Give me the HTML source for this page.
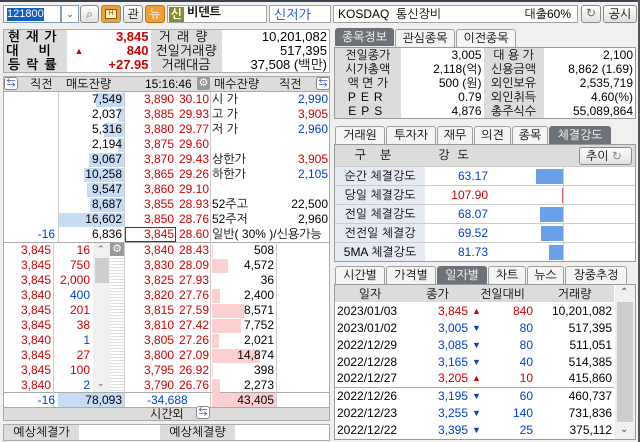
<!DOCTYPE html>
<html><head><meta charset="utf-8"><style>
*{box-sizing:border-box;margin:0;padding:0}
body{width:640px;height:442px;background:#f0f0f0;font-family:"Liberation Sans","NanumGothic","Noto Sans CJK KR",sans-serif;font-size:12px;color:#000;position:relative;overflow:hidden}
.a{position:absolute}
.r{color:#d00000}.b{color:#0040d0}
table{border-collapse:collapse;table-layout:fixed;position:absolute}
td{padding:0 2px;white-space:nowrap;overflow:hidden;line-height:14px}
.g{background:#dcdcdc}
.gl{background:#e6eaf2}
.w{background:#fff}
.R{text-align:right}.C{text-align:center}
.tab{position:absolute;height:18px;border:1px solid #a0a0a0;border-bottom:none;background:#f4f4f4;text-align:center;line-height:17px;font-size:12px;border-radius:3px 3px 0 0}
.tab.on{background:#6d7278;color:#fff;border-color:#6d7278}
.btn{position:absolute;border:1px solid #8a8a8a;border-radius:3px;background:linear-gradient(#fff,#e0e0e0);text-align:center}
</style></head><body>
<div class="a" style="left:0;top:0;width:640px;height:2px;background:#3a4450"></div>
<div class="a w" style="left:3px;top:5px;width:58px;height:18px;border:1px solid #7f9db9"><span style="background:#1060c0;color:#fff;font-size:11px;margin:2px 0 0 3px;display:inline-block;line-height:13px">121800</span></div>
<div class="a w" style="left:61px;top:5px;width:18px;height:18px;border:1px solid #7f9db9;text-align:center;font-size:9px;line-height:16px;color:#444">⌄</div>
<div class="btn" style="left:80px;top:5px;width:19px;height:18px;color:#666;line-height:16px">⌕</div>
<div class="btn" style="left:101px;top:5px;width:20px;height:18px;background:#f0a030"><div style="margin:3px auto;width:12px;height:10px;background:#fff3c0;border:1px solid #a05000;font-size:7px;line-height:8px;color:#a05000">H</div></div>
<div class="btn" style="left:123px;top:5px;width:20px;height:18px;line-height:16px">관</div>
<div class="btn" style="left:145px;top:5px;width:20px;height:18px;background:#f0a030;color:#fff;line-height:16px;border-color:#c07010">뉴</div>
<div class="a w" style="left:167px;top:5px;width:100px;height:18px;border:1px solid #a0a0a0"><span style="background:#8a8a30;color:#fff;display:inline-block;width:15px;height:15px;text-align:center;line-height:15px;margin:1px;font-weight:bold">신</span><b style="position:relative;top:-2px;margin-left:2px">비덴트</b></div>
<div class="a w b" style="left:269px;top:5px;width:62px;height:18px;border:1px solid #a0a0a0;padding:1px 4px;font-size:13px">신저가</div>
<div class="a w" style="left:333px;top:5px;width:245px;height:18px;border:1px solid #a0a0a0;padding:1px 4px">KOSDAQ&nbsp;&nbsp;통신장비<span style="position:absolute;right:6px">대출60%</span></div>
<div class="btn" style="left:581px;top:5px;width:20px;height:18px;color:#666;line-height:15px">↻</div>
<div class="btn" style="left:603px;top:5px;width:34px;height:18px;line-height:16px">공시</div>

<table style="left:3px;top:29px;width:327px;font-size:13px;border:1px solid #aaa">
<col style="width:63px"><col style="width:84px"><col style="width:71px"><col>
<tr><td class="g C" style="font-weight:bold;letter-spacing:6px">현재가</td><td class="w R r" style="font-weight:bold">3,845</td><td class="g C" style="letter-spacing:6px">거래량</td><td class="w R">10,201,082</td></tr>
<tr><td class="g C" style="font-weight:bold;letter-spacing:20px">대비</td><td class="w R r" style="font-weight:bold"><span style="float:left;font-size:9px;margin-left:6px">▲</span>840</td><td class="g C">전일거래량</td><td class="w R">517,395</td></tr>
<tr><td class="g C" style="font-weight:bold;letter-spacing:6px">등락률</td><td class="w R r" style="font-weight:bold">+27.95</td><td class="g C">거래대금</td><td class="w R">37,508 (백만)</td></tr>
</table>

<div class="a g" style="left:3px;top:76px;width:327px;height:16px;border:1px solid #aaa"></div>
<div class="a" style="left:4px;top:77px;width:14px;height:13px;border:1px solid #888;border-radius:3px;background:#fff;font-size:9px;line-height:11px;color:#2040c0;text-align:center">⇆</div>
<div class="a" style="left:30px;top:77px">직전</div>
<div class="a" style="left:66px;top:77px">매도잔량</div>
<div class="a" style="left:145px;top:77px">15:16:46</div>
<div class="a" style="left:197px;top:77px;width:13px;height:13px;background:#999;border-radius:2px;color:#fff;font-size:11px;line-height:13px;text-align:center">⚙</div>
<div class="a" style="left:214px;top:77px">매수잔량</div>
<div class="a" style="left:279px;top:77px">직전</div>
<div class="a" style="left:316px;top:77px;width:14px;height:13px;border:1px solid #888;border-radius:3px;background:#fff;font-size:9px;line-height:11px;color:#2040c0;text-align:center">⇆</div>

<div class="a w" style="left:3px;top:92px;width:327px;height:315px;border-left:1px solid #aaa;border-right:1px solid #aaa"></div>
<div class="a" style="left:3px;top:242px;width:327px;height:1px;background:#aaa"></div>
<div class="a" style="left:3px;top:392px;width:327px;height:1px;background:#aaa"></div>
<div class="a" style="left:58px;top:92px;width:1px;height:150px;background:#ccc"></div>
<div class="a" style="left:124px;top:92px;width:1px;height:150px;background:#ccc"></div>
<div class="a" style="left:210px;top:92px;width:1px;height:315px;background:#ccc"></div>
<div class="a" style="left:53px;top:242px;width:1px;height:165px;background:#ccc"></div>
<div class="a" style="left:124px;top:242px;width:1px;height:165px;background:#ccc"></div>
<div class="a" style="left:276px;top:242px;width:1px;height:165px;background:#ccc"></div>
<div class="a" style="left:93px;top:243px;width:17px;height:149px;background:#f0f0f0"></div>
<div class="a" style="left:95px;top:258px;width:14px;height:25px;background:#cdcdcd"></div>
<div class="a" style="left:97px;top:244px;font-size:9px;color:#555">⌃</div>
<div class="a" style="left:97px;top:378px;font-size:9px;color:#555">⌄</div>
<div class="a" style="left:110px;top:243px;width:14px;height:149px;background:repeating-linear-gradient(#ddd 0 1px,#fff 1px 3px)"></div>
<div class="a" style="left:110px;top:243px;width:14px;height:13px;background:#999;color:#fff;font-size:11px;line-height:13px;text-align:center">⚙</div>

<div id="ob"></div>
<div class="a" style="left:125px;top:227px;width:51px;height:15px;border:1px solid #d00000"></div>

<div class="a" style="left:58px;top:393px;width:66px;height:14px;background:#c6dcf5"></div>
<div class="a" style="left:212px;top:393px;width:64px;height:14px;background:#fcd0d0"></div>
<div class="a b R" style="left:5px;top:393px;width:50px;text-align:right">-16</div>
<div class="a R" style="left:58px;top:393px;width:64px;text-align:right">78,093</div>
<div class="a b" style="left:147px;top:393px">-34,688</div>
<div class="a" style="left:212px;top:393px;width:62px;text-align:right">43,405</div>
<div class="a g" style="left:3px;top:407px;width:327px;height:14px;border:1px solid #aaa"></div>
<div class="a" style="left:150px;top:407px">시간외</div>
<div class="a" style="left:196px;top:406px;width:14px;height:13px;border:1px solid #888;border-radius:3px;background:#fff;font-size:9px;line-height:11px;color:#2040c0;text-align:center">⇆</div>
<div class="a" style="left:3px;top:424px;width:327px;height:17px;border:1px solid #aaa;background:#fff"></div>
<div class="a g C" style="left:4px;top:425px;width:75px;height:15px">예상체결가</div>
<div class="a g C" style="left:160px;top:425px;width:75px;height:15px">예상체결량</div>

<div class="tab on" style="left:335px;top:28px;width:59px">종목정보</div>
<div class="tab" style="left:395px;top:29px;width:60px">관심종목</div>
<div class="tab" style="left:456px;top:29px;width:60px">이전종목</div>
<table style="left:334px;top:47px;width:302px;border:1px solid #999">
<col style="width:66px"><col style="width:83px"><col style="width:60px"><col>
<tr><td class="g C">전일종가</td><td class="w R">3,005</td><td class="g C">대 용 가</td><td class="w R">2,100</td></tr>
<tr><td class="g C">시가총액</td><td class="w R">2,118(억)</td><td class="g C">신용금액</td><td class="w R">8,862 (1.69)</td></tr>
<tr><td class="g C">액 면 가</td><td class="w R">500 (원)</td><td class="g C">외인보유</td><td class="w R">2,535,719</td></tr>
<tr><td class="g C" style="letter-spacing:5px">PER</td><td class="w R">0.79</td><td class="g C">외인취득</td><td class="w R">4.60(%)</td></tr>
<tr><td class="g C" style="letter-spacing:5px">EPS</td><td class="w R">4,876</td><td class="g C">총주식수</td><td class="w R">55,089,864</td></tr>
</table>

<div class="tab" style="left:335px;top:126px;width:50px">거래원</div>
<div class="tab" style="left:386px;top:126px;width:50px">투자자</div>
<div class="tab" style="left:437px;top:126px;width:36px">재무</div>
<div class="tab" style="left:474px;top:126px;width:37px">의견</div>
<div class="tab" style="left:512px;top:126px;width:36px">종목</div>
<div class="tab on" style="left:549px;top:126px;width:62px">체결강도</div>
<div class="a w" style="left:334px;top:144px;width:302px;height:118px;border:1px solid #999"></div>
<table style="left:335px;top:145px;width:300px">
<col style="width:90px"><col style="width:65px"><col>
<tr style="height:21px"><td class="g C" style="letter-spacing:14px">구분</td><td class="g C" style="letter-spacing:8px">강도</td><td class="g"></td></tr>
<tr style="height:19px;border-top:1px solid #ccc"><td class="gl C">순간 체결강도</td><td class="R b">63.17</td><td></td></tr>
<tr style="height:19px;border-top:1px solid #ccc"><td class="gl C">당일 체결강도</td><td class="R r">107.90</td><td></td></tr>
<tr style="height:19px;border-top:1px solid #ccc"><td class="gl C">전일 체결강도</td><td class="R b">68.07</td><td></td></tr>
<tr style="height:19px;border-top:1px solid #ccc"><td class="gl C">전전일 체결강</td><td class="R b">69.52</td><td></td></tr>
<tr style="height:19px;border-top:1px solid #ccc"><td class="gl C">5MA 체결강도</td><td class="R b">81.73</td><td></td></tr>
</table>
<div class="btn" style="left:579px;top:147px;width:53px;height:18px;line-height:16px;text-align:left;padding-left:6px">추이 <span style="color:#888">↻</span></div>
<div class="a" style="left:563px;top:166px;width:1px;height:95px;background:#ccc"></div>
<div class="a" style="left:536px;top:169px;width:27px;height:15px;background:#6aa0e8"></div>
<div class="a" style="left:562px;top:188px;width:1px;height:15px;background:#d06070"></div>
<div class="a" style="left:540px;top:207px;width:23px;height:15px;background:#6aa0e8"></div>
<div class="a" style="left:541px;top:226px;width:22px;height:15px;background:#6aa0e8"></div>
<div class="a" style="left:549px;top:245px;width:14px;height:15px;background:#6aa0e8"></div>

<div class="tab" style="left:335px;top:266px;width:50px">시간별</div>
<div class="tab" style="left:386px;top:266px;width:50px">가격별</div>
<div class="tab on" style="left:437px;top:266px;width:50px">일자별</div>
<div class="tab" style="left:488px;top:266px;width:38px">차트</div>
<div class="tab" style="left:527px;top:266px;width:37px">뉴스</div>
<div class="tab" style="left:565px;top:266px;width:62px">장중추정</div>
<div class="a w" style="left:334px;top:284px;width:302px;height:156px;border:1px solid #999"></div>
<table style="left:335px;top:285px;width:279px">
<col style="width:70px"><col style="width:65px"><col style="width:65px"><col>
<tr style="height:17px" class="g"><td class="C">일자</td><td class="C">종가</td><td class="C">전일대비</td><td class="C">거래량</td></tr>
<tr style="height:17px"><td>2023/01/03</td><td class="R r">3,845</td><td class="R r"><span style="float:left;font-size:9px">▲</span>840</td><td class="R">10,201,082</td></tr>
<tr style="height:17px"><td>2023/01/02</td><td class="R b">3,005</td><td class="R b"><span style="float:left;font-size:9px">▼</span>80</td><td class="R">517,395</td></tr>
<tr style="height:17px"><td>2022/12/29</td><td class="R b">3,085</td><td class="R b"><span style="float:left;font-size:9px">▼</span>80</td><td class="R">511,051</td></tr>
<tr style="height:17px"><td>2022/12/28</td><td class="R b">3,165</td><td class="R b"><span style="float:left;font-size:9px">▼</span>40</td><td class="R">514,385</td></tr>
<tr style="height:17px"><td>2022/12/27</td><td class="R r">3,205</td><td class="R r"><span style="float:left;font-size:9px">▲</span>10</td><td class="R">415,860</td></tr>
<tr style="height:17px;border-top:1px solid #aaa"><td>2022/12/26</td><td class="R b">3,195</td><td class="R b"><span style="float:left;font-size:9px">▼</span>60</td><td class="R">460,737</td></tr>
<tr style="height:17px"><td>2022/12/23</td><td class="R b">3,255</td><td class="R b"><span style="float:left;font-size:9px">▼</span>140</td><td class="R">731,836</td></tr>
<tr style="height:17px"><td>2022/12/22</td><td class="R b">3,395</td><td class="R b"><span style="float:left;font-size:9px">▼</span>25</td><td class="R">375,112</td></tr>
</table>
<div class="a" style="left:615px;top:285px;width:20px;height:154px;background:#f0f0f0"></div>
<div class="a" style="left:617px;top:302px;width:16px;height:120px;background:#cdcdcd"></div>
<div class="a" style="left:620px;top:287px;font-size:10px;color:#444">⌃</div>
<div class="a" style="left:620px;top:424px;font-size:10px;color:#444">⌄</div>
<div class="a" style="left:638px;top:0;width:2px;height:442px;background:#555"></div>

<script>
var ask=[["7,549","3,890","30.10","시 가","2,990","b",28],["2,037","3,885","29.93","고 가","3,905","r",6],["5,316","3,880","29.77","저 가","2,960","b",20],["2,194","3,875","29.60","","","",6],["9,067","3,870","29.43","상한가","3,905","r",35],["10,258","3,865","29.26","하한가","2,105","b",40],["9,547","3,860","29.10","","","",37],["8,687","3,855","28.93","52주고","22,500","",34],["16,602","3,850","28.76","52주저","2,960","",65],["6,836","3,845","28.60","일반( 30% )/신용가능","","",0]];
var bid=[["3,845","16","r","3,840","28.43","508",1],["3,845","750","r","3,830","28.09","4,572",16],["3,845","2,000","r","3,825","27.93","36",0],["3,840","400","b","3,820","27.76","2,400",8],["3,845","201","r","3,815","27.59","8,571",32],["3,845","38","r","3,810","27.42","7,752",29],["3,840","1","b","3,805","27.26","2,021",7],["3,845","27","r","3,800","27.09","14,874",48],["3,845","100","r","3,795","26.92","398",1],["3,840","2","b","3,790","26.76","2,273",8]];
var h="";
ask.forEach(function(a,i){var y=92+i*15;
h+='<div class="a" style="left:'+(124-a[6])+'px;top:'+(y+1)+'px;width:'+a[6]+'px;height:14px;background:#c6dcf5"></div>';
h+='<div class="a" style="left:58px;top:'+y+'px;width:64px;text-align:right;line-height:15px">'+a[0]+'</div>';
h+='<div class="a r" style="left:125px;top:'+y+'px;width:49px;text-align:right;line-height:15px">'+a[1]+'</div>';
h+='<div class="a r" style="left:176px;top:'+y+'px;width:33px;text-align:right;line-height:15px">'+a[2]+'</div>';
h+='<div class="a" style="left:212px;top:'+y+'px;line-height:15px">'+a[3]+'</div>';
h+='<div class="a '+a[5]+'" style="left:260px;top:'+y+'px;width:68px;text-align:right;line-height:15px">'+a[4]+'</div>';
if(i==9)h+='<div class="a b" style="left:5px;top:'+y+'px;width:50px;text-align:right;line-height:15px">-16</div>';
});
bid.forEach(function(a,i){var y=243+i*15;
h+='<div class="a" style="left:212px;top:'+(y+1)+'px;width:'+a[6]+'px;height:14px;background:#fcd0d0"></div>';
h+='<div class="a r" style="left:5px;top:'+y+'px;width:46px;text-align:right;line-height:15px">'+a[0]+'</div>';
h+='<div class="a '+a[2]+'" style="left:54px;top:'+y+'px;width:36px;text-align:right;line-height:15px">'+a[1]+'</div>';
h+='<div class="a r" style="left:125px;top:'+y+'px;width:49px;text-align:right;line-height:15px">'+a[3]+'</div>';
h+='<div class="a r" style="left:176px;top:'+y+'px;width:33px;text-align:right;line-height:15px">'+a[4]+'</div>';
h+='<div class="a" style="left:212px;top:'+y+'px;width:62px;text-align:right;line-height:15px">'+a[5]+'</div>';
});
document.getElementById("ob").innerHTML=h;
</script>
</body></html>
